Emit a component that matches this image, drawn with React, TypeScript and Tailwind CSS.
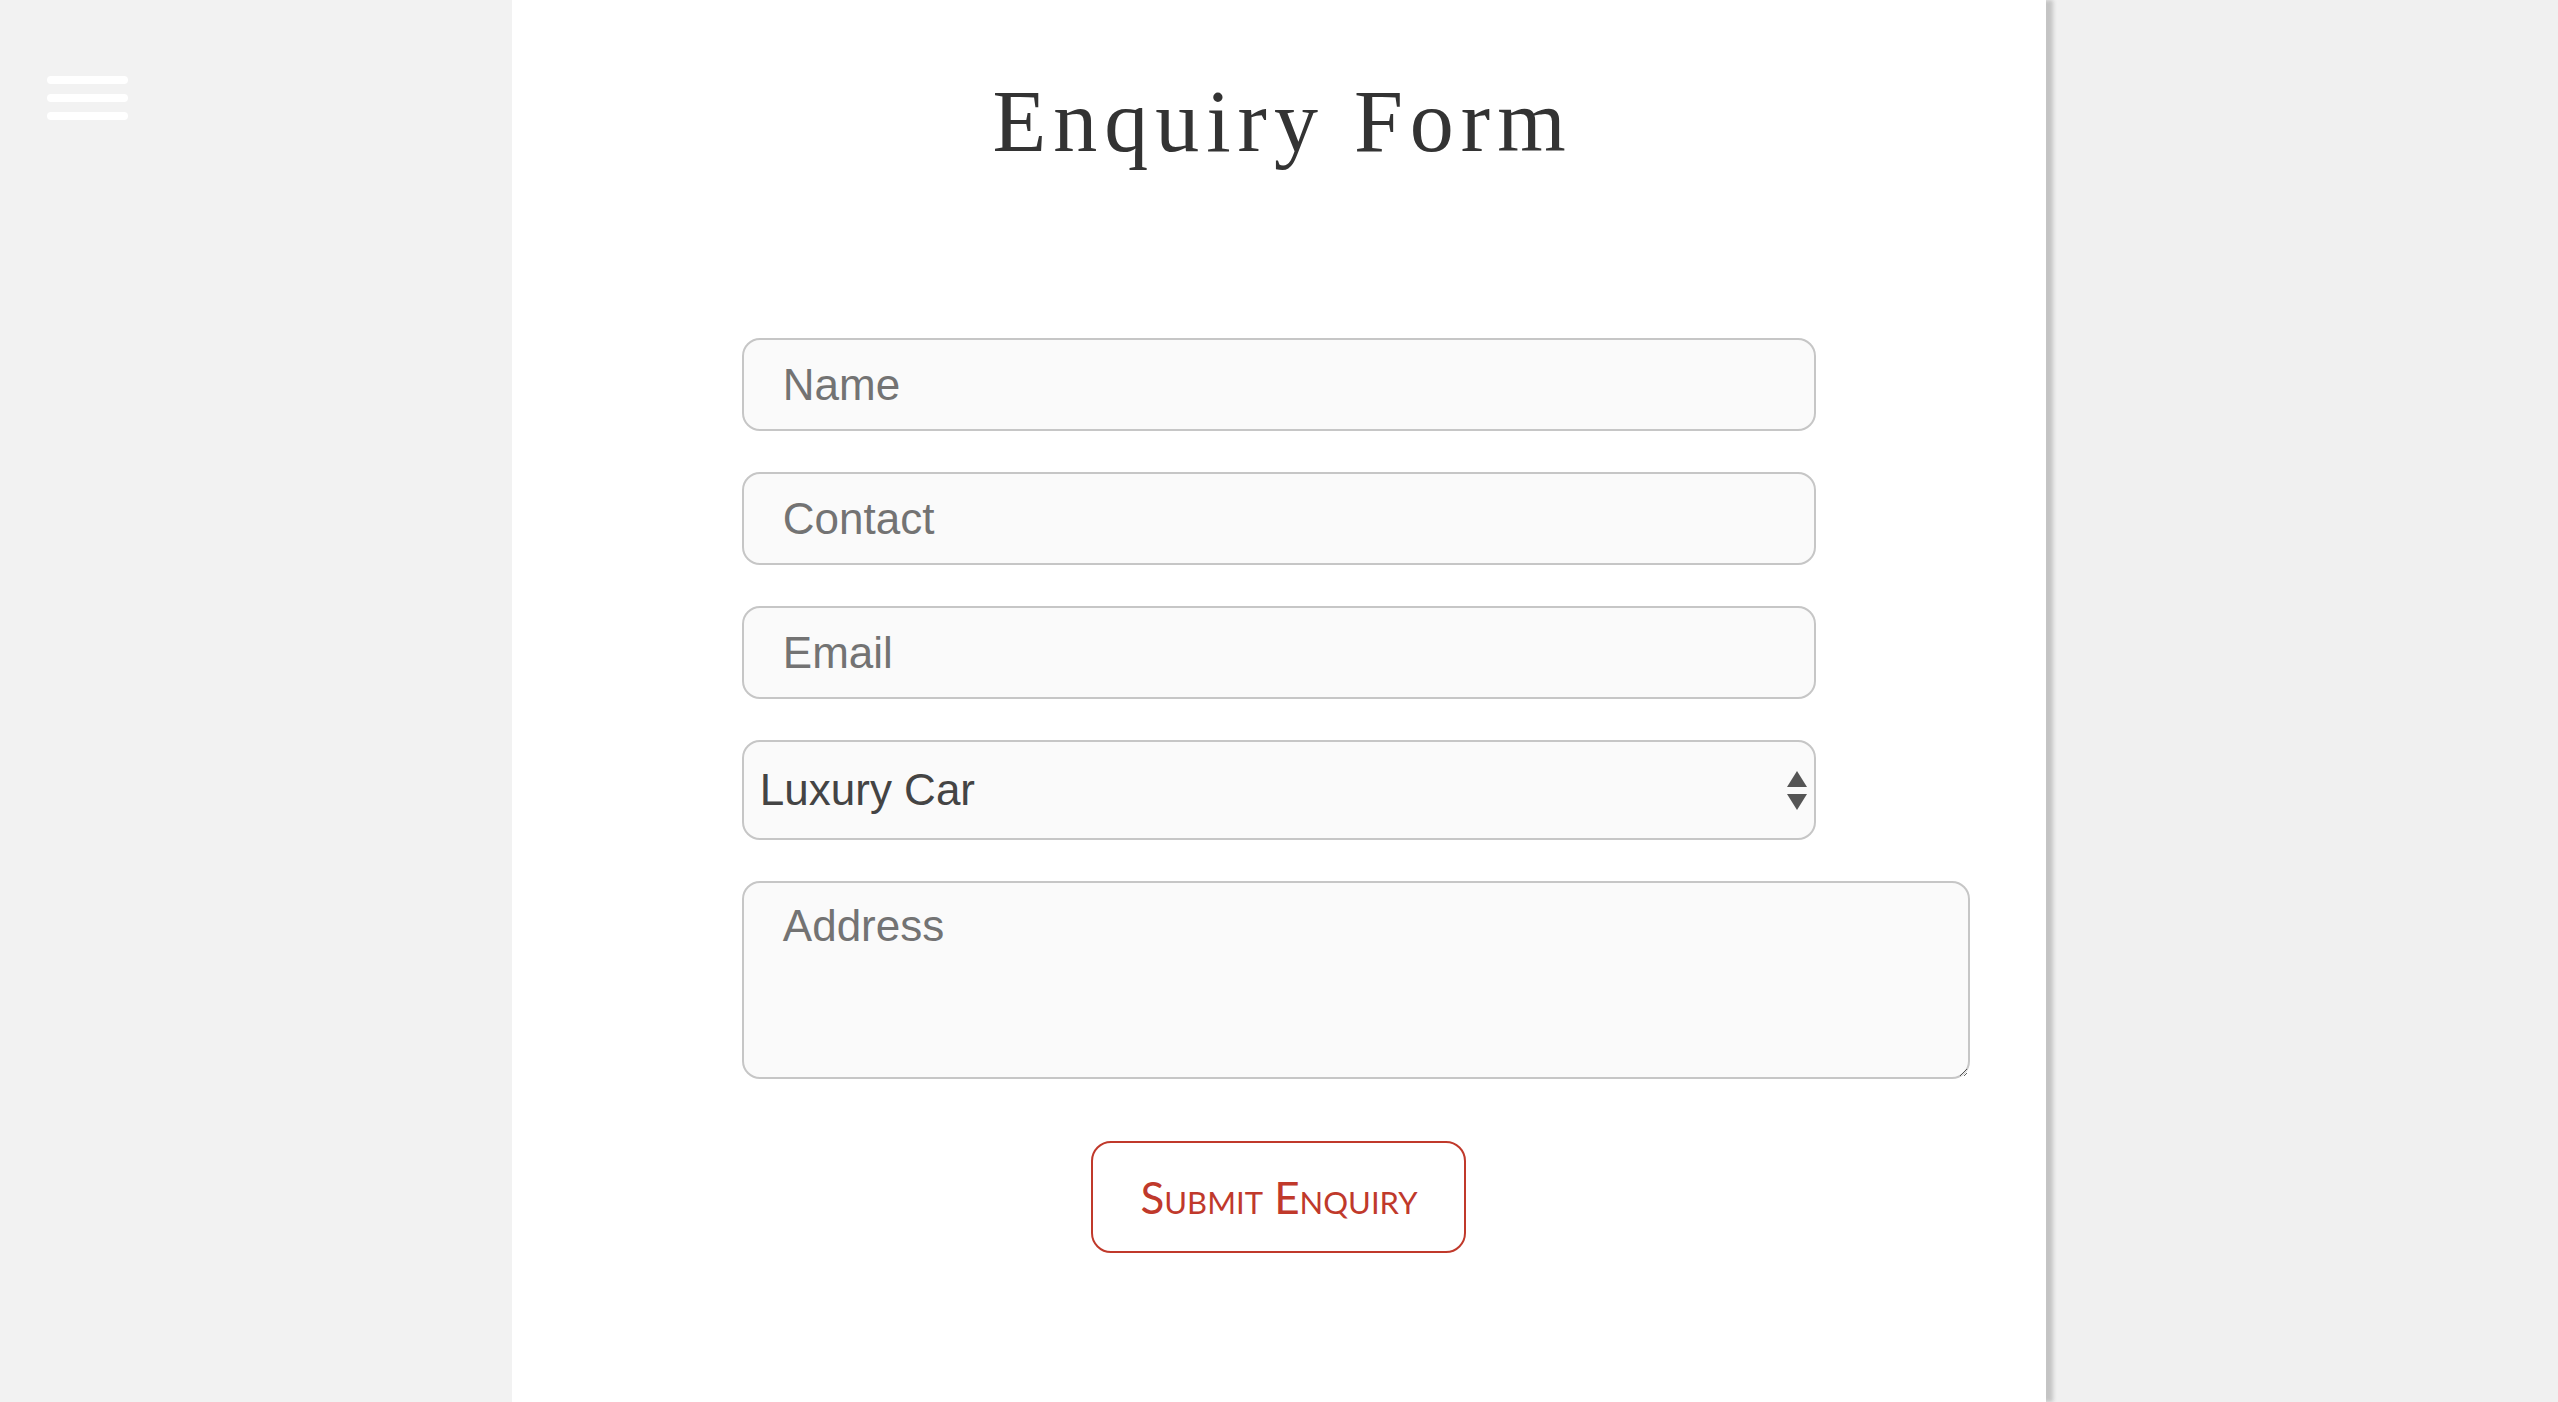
import React, { useState } from 'react';

const SANS = '[font-family:"Liberation_Sans",Arial,sans-serif]';

const fieldClass =
  'block h-[93px] w-[70%] mx-auto mb-[41px] rounded-[18px] border-2 border-[#c6c6c6] bg-[#fafafa] pl-[39px] pr-4 text-[44px] text-[#444] placeholder:text-[#737373] outline-none ' +
  SANS;

const MenuIcon = () => (
  <button type="button" aria-label="Menu" className="flex flex-col gap-[10px]">
    <span className="block h-[8px] w-[81px] rounded-[4px] bg-white" />
    <span className="block h-[8px] w-[81px] rounded-[4px] bg-white" />
    <span className="block h-[8px] w-[81px] rounded-[4px] bg-white" />
  </button>
);

const App: React.FC = () => {
  const [name, setName] = useState('');
  const [contact, setContact] = useState('');
  const [email, setEmail] = useState('');
  const [car, setCar] = useState('luxury');
  const [address, setAddress] = useState('');

  const handleSubmit = (e: React.FormEvent) => {
    e.preventDefault();
  };

  return (
    <div className="flex h-screen w-full overflow-hidden bg-[#f0f0f0]">
      {/* left rail with the menu */}
      <div className="w-[20%] shrink-0 bg-[#f2f2f2] pl-[47px] pt-[76px]">
        <MenuIcon />
      </div>

      {/* main panel */}
      <main className="relative z-10 flex w-[60%] shrink-0 flex-col bg-white shadow-[7px_0_4px_#c4c4c4]">
        <h1 className='mt-[78px] pl-[7px] text-center text-[88px] leading-none tracking-[7px] text-[#333] [font-family:"Liberation_Serif","Times_New_Roman",serif]'>
          Enquiry Form
        </h1>

        <form onSubmit={handleSubmit} className="mt-[172px] flex flex-col">
          <input
            className={fieldClass}
            placeholder="Name"
            value={name}
            onChange={(e) => setName(e.target.value)}
          />
          <input
            className={fieldClass}
            placeholder="Contact"
            value={contact}
            onChange={(e) => setContact(e.target.value)}
          />
          <input
            className={fieldClass}
            placeholder="Email"
            value={email}
            onChange={(e) => setEmail(e.target.value)}
          />

          <div className="relative mx-auto mb-[41px] w-[70%]">
            <select
              value={car}
              onChange={(e) => setCar(e.target.value)}
              className={
                'block h-[100px] w-full appearance-none rounded-[18px] border-2 border-[#c6c6c6] bg-[#fafafa] pl-[16px] text-[44px] text-[#444] outline-none ' +
                SANS
              }
            >
              <option value="luxury">Luxury Car</option>
              <option value="sedan">Sedan</option>
              <option value="suv">SUV</option>
            </select>
            {/* up / down arrows */}
            <svg
              className="pointer-events-none absolute right-[9px] top-[31px]"
              width="20"
              height="39"
              viewBox="0 0 20 39"
            >
              <polygon points="10,0 20,16 0,16" fill="#555" />
              <polygon points="0,23 20,23 10,39" fill="#555" />
            </svg>
          </div>

          <textarea
            placeholder="Address"
            value={address}
            onChange={(e) => setAddress(e.target.value)}
            className={
              'ml-[15%] block h-[198px] w-[80%] rounded-[18px] border-2 border-[#c6c6c6] bg-[#fafafa] pl-[39px] pt-[10px] text-[44px] text-[#444] placeholder:text-[#737373] outline-none ' +
              SANS
            }
          />

          <button
            type="submit"
            className='mx-auto mt-[62px] h-[112px] w-[375px] rounded-[20px] border-2 border-[#c0392b] bg-white text-[44px] text-[#c0392b] [font-variant:small-caps] [font-family:"Lato","Open_Sans",sans-serif]'
          >
            Submit Enquiry
          </button>
        </form>
      </main>

      <div className="flex-1" />
    </div>
  );
};

export default App;
